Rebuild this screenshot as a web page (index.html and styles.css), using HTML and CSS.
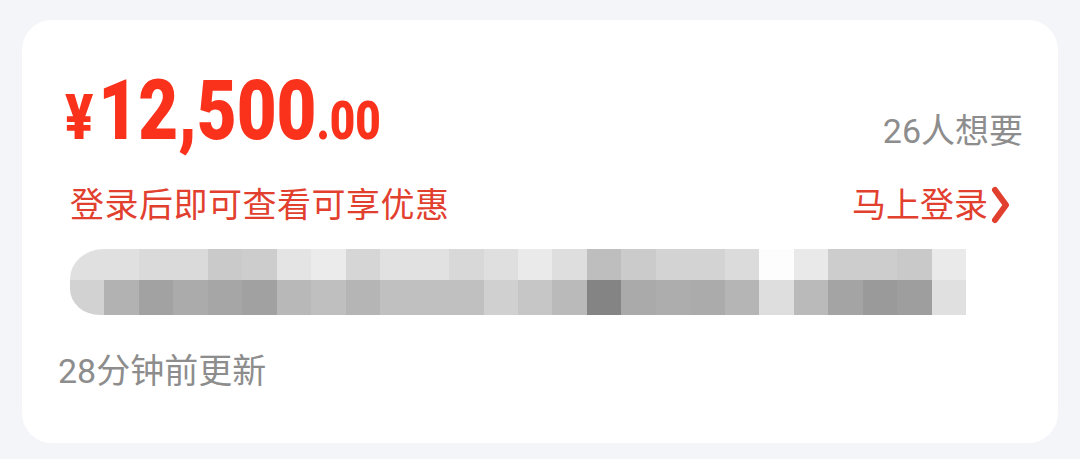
FILE: index.html
```html
<!DOCTYPE html>
<html lang="zh-CN">
<head>
  <meta charset="UTF-8" />
  <meta name="viewport" content="width=device-width, initial-scale=1.0" />
  <title>商品价格</title>
  <link rel="stylesheet" href="styles.css">
</head>
<body>
  <div class="card">
    <div class="price-row">
      <div class="price">
        <span class="yen">¥</span><span class="int">12,500</span><span class="dec">.00</span>
      </div>
      <div class="want">26人想要</div>
    </div>

    <div class="login-row">
      <span class="login-tip">登录后即可查看可享优惠</span>
      <a class="login-link" href="#">马上登录
        <svg class="chevron" viewBox="0 0 20 38" width="20" height="38">
          <polyline points="4,4 15,19 4,34" fill="none" stroke="currentColor" stroke-width="6" stroke-linecap="round" stroke-linejoin="round" />
        </svg>
      </a>
    </div>

    <div class="mosaic" id="mosaic"></div>

    <div class="updated">28分钟前更新</div>
  </div>

  <script>
    // tons de cinza do bloco pixelado (linha de cima, linha de baixo)
    const topRow = ['#e0e0e0','#e0e0e0','#dadada','#dadada','#cacaca','#cdcdcd','#e4e4e4','#ebebeb','#d6d6d6','#e1e1e1','#e1e1e1','#d8d8d8','#dfdfdf',
                    '#eaeaea','#dedede','#bebebe','#cbcbcb','#d3d3d3','#d3d3d3','#dbdbdb','#fdfdfd','#e9e9e9','#cdcdcd','#cdcdcd','#c9c9c9','#eaeaea'];
    const bottomRow = ['#d2d2d2','#b2b2b2','#a2a2a2','#ababab','#a6a6a6','#a1a1a1','#b8b8b8','#bfbfbf','#b5b5b5','#c0c0c0','#c0c0c0','#c0c0c0','#d0d0d0',
                       '#c6c6c6','#bababa','#848484','#aaaaaa','#adadad','#ababab','#b5b5b5','#dedede','#bababa','#a4a4a4','#9a9a9a','#9e9e9e','#e0e0e0'];
    const mosaic = document.getElementById('mosaic');
    [topRow, bottomRow].forEach(function(row, r) {
      row.forEach(function(color) {
        const cell = document.createElement('div');
        cell.className = r === 0 ? 'cell cell-top' : 'cell cell-bottom';
        cell.style.background = color;
        mosaic.appendChild(cell);
      });
    });
  </script>
</body>
</html>
```

FILE: styles.css
```css
:root {
  --fundo: #f4f5f8;
  --vermelho-preco: #fa321c;
  --vermelho-texto: #e2402f;
  --cinza: #8d8d8d;
}
body {
  margin: 0;
  padding: 20px 22px 16px;
  background: var(--fundo);
  font-family: Roboto, "Noto Sans CJK SC", sans-serif;
}
.card {
  box-sizing: border-box;
  height: 423px;
  background: #fff;
  border-radius: 30px;
  padding: 50px 35px 0 36px;
}
.price-row {
  display: flex;
  justify-content: space-between;
  align-items: flex-end;
  padding-left: 7px;
}
.price {
  font-family: Roboto, "Liberation Sans", sans-serif;
  font-weight: 900;
  font-size: 83px;
  line-height: 82px;
  color: var(--vermelho-preco);
  white-space: nowrap;
  transform: scaleX(0.83);
  transform-origin: left bottom;
}
.yen {
  font-size: 63px;
  line-height: 1;
  margin-right: 6px;
}
.dec {
  font-size: 53px;
  line-height: 1;
}
.want {
  font-size: 34px;
  line-height: 40px;
  color: var(--cinza);
  margin-bottom: 1px;
}
.login-row {
  display: flex;
  justify-content: space-between;
  align-items: center;
  margin-top: 33px;
  padding-left: 12px;
  font-size: 34px;
  line-height: 40px;
  color: var(--vermelho-texto);
}
.login-tip {
  letter-spacing: 0.5px;
}
.login-link {
  display: flex;
  align-items: center;
  color: var(--vermelho-texto);
  text-decoration: none;
  margin-right: 12px;
}
.chevron {
  margin-left: 3px;
}
.mosaic {
  display: grid;
  grid-template-columns: repeat(26, 1fr);
  grid-template-rows: 31px 35px;
  width: 896px;
  margin: 24px 0 0 12px;
}
.cell-top:first-child {
  border-top-left-radius: 34px 30px;
}
.cell-bottom:nth-child(27) {
  border-bottom-left-radius: 30px 26px;
}
.updated {
  margin-top: 36px;
  font-size: 34px;
  line-height: 40px;
  color: var(--cinza);
}
```
